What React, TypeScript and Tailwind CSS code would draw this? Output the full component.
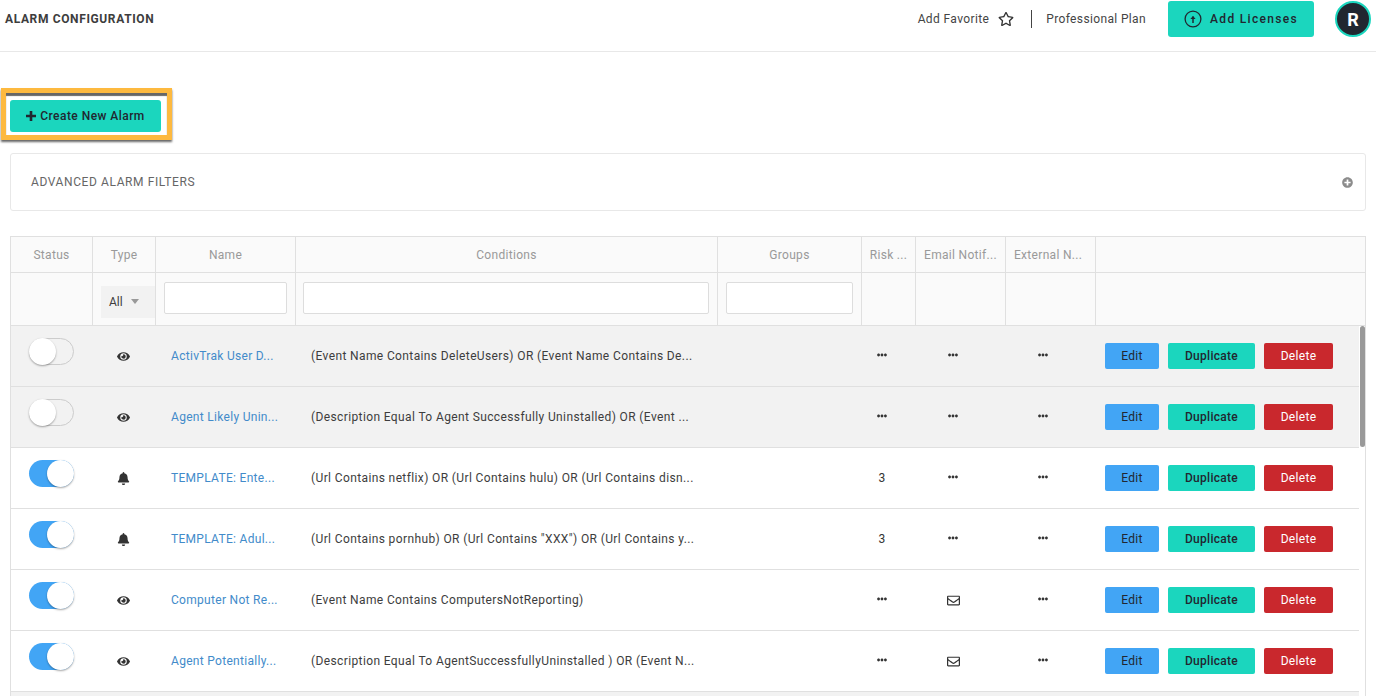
import React from "react";
import { FaEye, FaBell, FaRegEnvelope, FaRegStar, FaPlusCircle, FaEllipsisH } from "react-icons/fa";

const cols = "grid grid-cols-[82px_63px_140px_422px_144px_54px_90px_90px_261px]";
const headers = ["Status", "Type", "Name", "Conditions", "Groups", "Risk ...", "Email Notif...", "External N...", ""];

type Row = { on: boolean; kind: "eye" | "bell"; name: string; cond: string; risk: string; mail: boolean };
const rows: Row[] = [
  { on: false, kind: "eye", name: "ActivTrak User D...", cond: "(Event Name Contains DeleteUsers) OR (Event Name Contains De...", risk: "", mail: false },
  { on: false, kind: "eye", name: "Agent Likely Unin...", cond: "(Description Equal To Agent Successfully Uninstalled) OR (Event ...", risk: "", mail: false },
  { on: true, kind: "bell", name: "TEMPLATE: Ente...", cond: "(Url Contains netflix) OR (Url Contains hulu) OR (Url Contains disn...", risk: "3", mail: false },
  { on: true, kind: "bell", name: "TEMPLATE: Adul...", cond: '(Url Contains pornhub) OR (Url Contains "XXX") OR (Url Contains y...', risk: "3", mail: false },
  { on: true, kind: "eye", name: "Computer Not Re...", cond: "(Event Name Contains ComputersNotReporting)", risk: "", mail: true },
  { on: true, kind: "eye", name: "Agent Potentially...", cond: "(Description Equal To AgentSuccessfullyUninstalled ) OR (Event N...", risk: "", mail: true },
];

function Dots() {
  return <FaEllipsisH className="mb-[2px] text-[10px] text-[#333]" />;
}

function Toggle({ on }: { on: boolean }) {
  return (
    <div className={`relative mt-3 ml-[18px] h-[27px] w-[45px] rounded-full ${on ? "bg-[#42a5f5]" : "border border-[#ccc] bg-[#f2f2f2]"}`}>
      <div className={`absolute h-[27px] w-[27px] rounded-full bg-white shadow-[0_1px_2px_rgba(0,0,0,0.35)] ${on ? "top-0 right-0" : "-top-px -left-px"}`} />
    </div>
  );
}

function DataRow({ r }: { r: Row }) {
  return (
    <div className={`${cols} h-[61px] border-b border-[#e0e0e0] text-xs tracking-[0.3px] ${r.on ? "bg-white" : "bg-[#f2f2f2]"}`}>
      <div><Toggle on={r.on} /></div>
      <div className="flex items-center justify-center pr-[2px] text-[13px] text-[#333]">
        {r.kind === "eye" ? <FaEye /> : <FaBell />}
      </div>
      <div className="flex items-center pl-[15px] text-[#428bca]">{r.name}</div>
      <div className="flex items-center whitespace-nowrap pl-[15px] tracking-[0.38px] text-[#3d3d3d]">{r.cond}</div>
      <div />
      <div className="flex items-center justify-center pr-[14px] text-[#333]">{r.risk || <Dots />}</div>
      <div className="flex items-center justify-center pr-[16px] text-[13px] text-[#333]">{r.mail ? <FaRegEnvelope /> : <Dots />}</div>
      <div className="flex items-center justify-center pr-[16px]"><Dots /></div>
      <div className="flex items-center pl-[9px] gap-[9px]">
        <button className="h-[26px] w-[54px] rounded-[2px] bg-[#42a5f5] text-[#212730]">Edit</button>
        <button className="h-[26px] w-[87px] rounded-[2px] bg-[#1bd6be] font-medium text-[#212730]">Duplicate</button>
        <button className="h-[26px] w-[69px] rounded-[2px] bg-[#c9282d] text-white">Delete</button>
      </div>
    </div>
  );
}

export default function App() {
  return (
    <div className="h-[696px] overflow-hidden bg-white font-['Roboto',sans-serif] text-[#3d3d3d]">
      <header className="flex h-[52px] items-center border-b border-[#e8e8e8] pb-[13px] pl-[5px] pr-[5px]">
        <h1 className="text-xs font-bold tracking-[0.63px] text-[#3d3d3d]">ALARM CONFIGURATION</h1>
        <div className="ml-auto flex items-center">
          <span className="mb-[1px] text-xs tracking-[0.38px] text-[#444]">Add Favorite</span>
          <FaRegStar className="ml-[9px] text-[16px] text-[#333]" />
          <div className="ml-[17px] mr-[14px] h-[18px] w-px bg-[#444]" />
          <span className="text-xs tracking-[0.36px] text-[#444]">Professional Plan</span>
          <button className="ml-[22px] flex h-[36px] w-[146px] items-center justify-center gap-[8px] rounded-[3px] bg-[#1bd6be] text-xs font-medium tracking-[1.3px] text-[#212730]">
            <svg viewBox="0 0 18 18" className="h-[18px] w-[18px]" fill="none" stroke="#212730">
              <circle cx="9" cy="9" r="7.9" strokeWidth="1.3" />
              <path d="M9 13V6.5" strokeWidth="1.5" />
              <path d="M6.4 9 9 6l2.6 3z" fill="#212730" stroke="none" />
            </svg>
            Add Licenses
          </button>
          <div className="ml-[21px] flex h-[36px] w-[36px] items-center justify-center rounded-full border-2 border-[#1bd6be] bg-[#212730] text-[18px] font-bold text-white">R</div>
        </div>
      </header>

      <div className="ml-[1px] mt-[36px] flex h-[52px] w-[171px] items-start border-[5px] border-[#fdb93f] bg-white pl-1 pt-[7px] shadow-[0_2px_2px_rgba(0,0,0,0.6),inset_0_3px_1px_#666]">
        <button className="flex h-[32px] w-[151px] items-center justify-center gap-[4px] rounded-[3px] bg-[#1bd6be] text-xs font-medium tracking-[0.45px] text-[#212730]">
          <svg viewBox="0 0 10 10" className="h-[10px] w-[10px]" fill="#212730">
            <path d="M3.7 0h2.6v3.7H10v2.6H6.3V10H3.7V6.3H0V3.7h3.7z" />
          </svg>
          Create New Alarm
        </button>
      </div>

      <section className="ml-[10px] mt-[13px] flex h-[58px] w-[1356px] items-center justify-between rounded-[3px] border border-[#e8e8e8] pl-5 pr-3">
        <span className="text-xs tracking-[0.6px] text-[#666]">ADVANCED ALARM FILTERS</span>
        <FaPlusCircle className="text-[11px] text-[#8c8c8c]" />
      </section>

      <section className="relative ml-[10px] mt-[25px] w-[1356px] border-x border-t border-[#e0e0e0] bg-white">
        <div className={`${cols} h-[36px] border-b border-[#e0e0e0] bg-[#fafafa] text-xs tracking-[0.3px] text-[#999]`}>
          {headers.map((h, i) => (
            <div key={i} className={`flex items-center ${i === 7 ? "justify-start pl-[8px]" : "justify-center"} ${i < 8 ? "border-r border-[#e0e0e0]" : ""}`}>{h}</div>
          ))}
        </div>
        <div className={`${cols} h-[53px] border-b border-[#e0e0e0] bg-[#fafafa]`}>
          <div className="border-r border-[#e0e0e0]" />
          <div className="flex items-center border-r border-[#e0e0e0] pl-2">
            <div className="mt-[6px] flex h-[32px] w-[54px] items-center gap-[8px] bg-[#f2f2f2] pl-2 text-xs text-[#3d3d3d]">
              All <span className="mb-[2px] h-0 w-0 border-x-[4px] border-t-[5px] border-x-transparent border-t-[#999]" />
            </div>
          </div>
          <div className="flex items-center justify-center border-r border-[#e0e0e0]">
            <input aria-label="Name filter" className="mb-[2px] h-[32px] w-[123px] rounded-[2px] border border-[#ddd] bg-white" />
          </div>
          <div className="flex items-center justify-center border-r border-[#e0e0e0] pr-[2px]">
            <input aria-label="Conditions filter" className="mb-[2px] h-[32px] w-[406px] rounded-[2px] border border-[#ddd] bg-white" />
          </div>
          <div className="flex items-center justify-center border-r border-[#e0e0e0]">
            <input aria-label="Groups filter" className="mb-[2px] h-[32px] w-[127px] rounded-[2px] border border-[#ddd] bg-white" />
          </div>
          <div className="border-r border-[#e0e0e0]" />
          <div className="border-r border-[#e0e0e0]" />
          <div className="border-r border-[#e0e0e0]" />
          <div />
        </div>
        <div className="w-[1348px]">
          {rows.map((r) => <DataRow key={r.name} r={r} />)}
          <div className="h-[10px] bg-[#f2f2f2]" />
        </div>
        <div className="absolute right-0 top-[89px] h-[121px] w-[5px] rounded-full bg-[#999]" />
      </section>
    </div>
  );
}
